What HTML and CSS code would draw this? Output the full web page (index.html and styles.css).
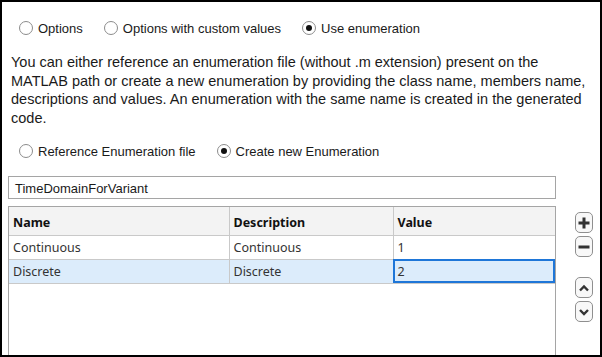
FILE: index.html
```html
<!DOCTYPE html>
<html lang="en">
<head>
    <meta charset="UTF-8">
    <meta name="viewport" content="width=device-width, initial-scale=1.0">
    <title>Enumeration</title>
    <link rel="stylesheet" href="styles.css">
</head>
<body>
    <div class="panel">
        <div class="radios">
            <label class="radio"><span class="dot"></span>Options</label>
            <label class="radio"><span class="dot"></span>Options with custom values</label>
            <label class="radio"><span class="dot on"></span>Use enumeration</label>
        </div>
        <p class="info">You can either reference an enumeration file (without .m extension) present on the MATLAB path or create a new enumeration by providing the class name, members name, descriptions and values. An enumeration with the same name is created in the generated code.</p>
        <div class="radios second">
            <label class="radio"><span class="dot"></span>Reference Enumeration file</label>
            <label class="radio"><span class="dot on"></span>Create new Enumeration</label>
        </div>
        <div class="field">TimeDomainForVariant</div>
        <div class="lower">
            <div class="grid">
                <table>
                    <tr class="head">
                        <th class="c1">Name</th>
                        <th class="c2">Description</th>
                        <th class="c3">Value</th>
                    </tr>
                    <tr>
                        <td>Continuous</td>
                        <td>Continuous</td>
                        <td>1</td>
                    </tr>
                    <tr class="selected">
                        <td>Discrete</td>
                        <td>Discrete</td>
                        <td class="editing">2</td>
                    </tr>
                </table>
            </div>
            <div class="tools">
                <div class="btn"><svg width="12" height="12" viewBox="0 0 12 12"><path d="M6 0.5v11M0.5 6h11" stroke="#333" stroke-width="3"/></svg></div>
                <div class="btn"><svg width="12" height="12" viewBox="0 0 12 12"><path d="M0.5 6h11" stroke="#333" stroke-width="3"/></svg></div>
                <div class="btn up"><svg width="12" height="12" viewBox="0 0 12 12"><path d="M2 8.5l4-4 4 4" fill="none" stroke="#333" stroke-width="2.4"/></svg></div>
                <div class="btn"><svg width="12" height="12" viewBox="0 0 12 12"><path d="M2 4l4 4 4-4" fill="none" stroke="#333" stroke-width="2.4"/></svg></div>
            </div>
        </div>
    </div>
</body>
</html>
```

FILE: styles.css
```css
body{
    margin: 0;
    background: #fff;
}
.panel{
    box-sizing: border-box;
    width: 602px;
    height: 357px;
    border: 2px solid #000;
    padding: 16px 0 0 6px;
    display: flex;
    flex-direction: column;
    font-family: "Liberation Sans", Arial, sans-serif;
    color: #1a1a1a;
}
.radios{
    display: flex;
    gap: 21px;
    padding-left: 11px;
    font-size: 13px;
    height: 20px;
    align-items: center;
}
.radio{
    display: flex;
    align-items: center;
    gap: 5px;
}
.dot{
    box-sizing: border-box;
    width: 14px;
    height: 14px;
    border: 1px solid #8c8c8c;
    border-radius: 50%;
    display: flex;
    align-items: center;
    justify-content: center;
}
.dot.on::after{
    content: "";
    width: 6px;
    height: 6px;
    border-radius: 50%;
    background: #111;
}
.info{
    margin: 15px 0 0 3px;
    width: 582px;
    font-size: 14.5px;
    line-height: 18.5px;
}
.second{
    margin-top: 14px;
}
.field{
    box-sizing: border-box;
    margin-top: 15px;
    width: 548px;
    height: 23px;
    border: 1px solid #a5a5a5;
    padding: 4px 0 0 6px;
    font-size: 13px;
}
.lower{
    display: flex;
    flex: 1;
    margin-top: 7px;
}
.grid{
    box-sizing: border-box;
    width: 548px;
    border: 1px solid #a5a5a5;
    border-bottom: none;
}
table{
    border-collapse: collapse;
    table-layout: fixed;
    width: 100%;
    font-family: "Noto Sans", "Open Sans", sans-serif;
    font-size: 12.5px;
    color: #333;
}
th, td{
    text-align: left;
    padding: 0 0 0 4px;
    border-right: 1px solid #c9c9c9;
    border-bottom: 1px solid #c9c9c9;
}
th:last-child, td:last-child{
    border-right: none;
}
th{
    height: 28px;
    padding-top: 3px;
    box-sizing: border-box;
    background: #f3f3f3;
    color: #111;
    font-weight: bold;
}
td{
    height: 23px;
}
.c1{
    width: 220px;
}
.c2{
    width: 164px;
}
.selected td{
    background: #dcecfb;
}
.selected td.editing{
    outline: 2px solid #1e76d8;
    outline-offset: -2px;
}
.tools{
    display: flex;
    flex-direction: column;
    margin: 6px 0 0 19px;
    gap: 3px;
}
.btn{
    box-sizing: border-box;
    width: 18px;
    height: 21px;
    border: 1px solid #8f8f8f;
    border-radius: 5px;
    background: #f8f8f8;
    display: flex;
    align-items: center;
    justify-content: center;
}
.btn.up{
    margin-top: 17px;
}
```
